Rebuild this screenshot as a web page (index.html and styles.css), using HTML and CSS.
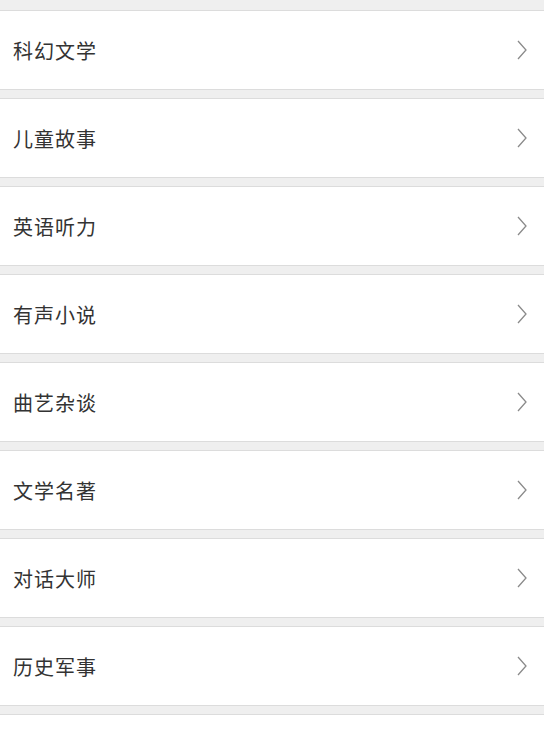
FILE: index.html
```html
<!DOCTYPE html>
<html lang="zh-CN">
<head>
    <meta charset="UTF-8">
    <meta name="viewport" content="width=device-width, initial-scale=1.0">
    <title>分类</title>
    <link rel="stylesheet" href="styles.css">
</head>
<body>
    <ul class="category-list">
        <li class="category-item"><span class="category-name">科幻文学</span><svg class="chevron" viewBox="0 0 10 20"><polyline points="1,1 9,10 1,19"/></svg></li>
        <li class="category-item"><span class="category-name">儿童故事</span><svg class="chevron" viewBox="0 0 10 20"><polyline points="1,1 9,10 1,19"/></svg></li>
        <li class="category-item"><span class="category-name">英语听力</span><svg class="chevron" viewBox="0 0 10 20"><polyline points="1,1 9,10 1,19"/></svg></li>
        <li class="category-item"><span class="category-name">有声小说</span><svg class="chevron" viewBox="0 0 10 20"><polyline points="1,1 9,10 1,19"/></svg></li>
        <li class="category-item"><span class="category-name">曲艺杂谈</span><svg class="chevron" viewBox="0 0 10 20"><polyline points="1,1 9,10 1,19"/></svg></li>
        <li class="category-item"><span class="category-name">文学名著</span><svg class="chevron" viewBox="0 0 10 20"><polyline points="1,1 9,10 1,19"/></svg></li>
        <li class="category-item"><span class="category-name">对话大师</span><svg class="chevron" viewBox="0 0 10 20"><polyline points="1,1 9,10 1,19"/></svg></li>
        <li class="category-item"><span class="category-name">历史军事</span><svg class="chevron" viewBox="0 0 10 20"><polyline points="1,1 9,10 1,19"/></svg></li>
        <li class="category-item"><span class="category-name">相声评书</span><svg class="chevron" viewBox="0 0 10 20"><polyline points="1,1 9,10 1,19"/></svg></li>
    </ul>
</body>
</html>
```

FILE: styles.css
```css
body {
    margin: 0;
    padding: 0;
    background-color: #efefef;
    font-family: "Noto Sans CJK SC", "Noto Sans", sans-serif;
}

.category-list {
    list-style: none;
    margin: 0;
    padding: 10px 0 0;
    display: flex;
    flex-direction: column;
    gap: 8px;
}

.category-item {
    height: 78px;
    display: flex;
    align-items: center;
    justify-content: space-between;
    padding: 0 17px 0 13px;
    background-color: #fff;
    border-top: 1px solid #dcdcdc;
    border-bottom: 1px solid #dcdcdc;
}

.category-name {
    font-size: 20px;
    color: #333;
    letter-spacing: 1px;
}

/* 右侧箭头 */
.chevron {
    width: 10px;
    height: 20px;
    fill: none;
    stroke: #8a8a8a;
    stroke-width: 1.3;
}
```
